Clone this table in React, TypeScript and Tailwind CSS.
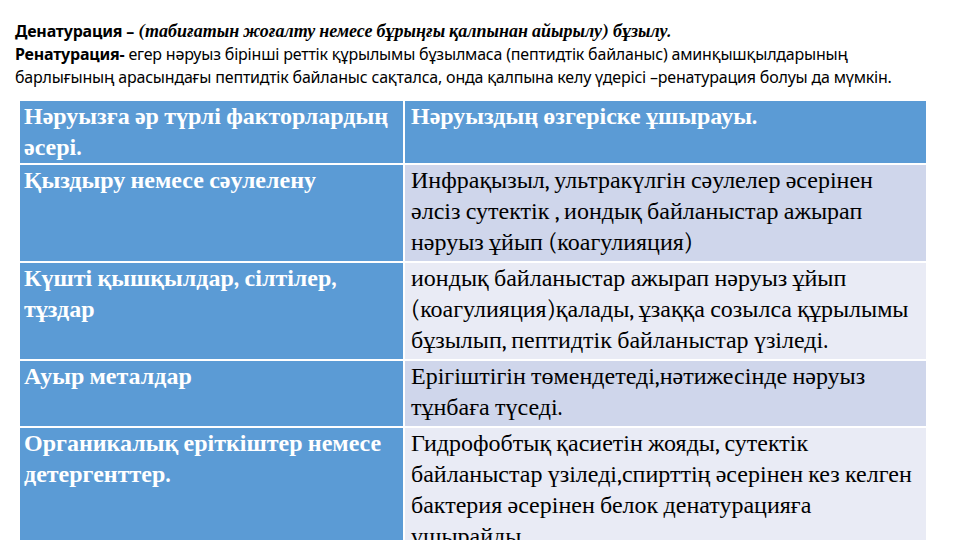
import React from 'react'

const rows = [
  {
    left: 'Қыздыру немесе сәулелену',
    right: 'Инфрақызыл, ультракүлгін сәулелер әсерінен әлсіз сутектік , иондық байланыстар ажырап нәруыз ұйып (коагулияция)',
    shade: 'bg-[#cfd6eb]',
  },
  {
    left: 'Күшті қышқылдар, сілтілер, тұздар',
    right: 'иондық байланыстар ажырап нәруыз ұйып (коагулияция)қалады, ұзаққа созылса құрылымы бұзылып, пептидтік байланыстар үзіледі.',
    shade: 'bg-[#e9ebf5]',
  },
  {
    left: 'Ауыр металдар',
    right: 'Ерігіштігін төмендетеді,нәтижесінде нәруыз тұнбаға түседі.',
    shade: 'bg-[#cfd6eb]',
  },
  {
    left: 'Органикалық еріткіштер немесе детергенттер.',
    right: 'Гидрофобтық қасиетін жояды, сутектік байланыстар үзіледі,спирттің әсерінен кез келген бактерия әсерінен белок денатурацияға ұшырайды.',
    shade: 'bg-[#e9ebf5]',
  },
]

export default function App() {
  return (
    <div className="w-[960px] h-[540px] overflow-hidden bg-white">
      {/* жоғарғы мәтін */}
      <div className="pl-[15px] pt-[20px] text-[16px] leading-[23px] text-black font-sans tracking-[-0.2px]">
        <p>
          <span className="font-bold">Денатурация – </span>
          <span className="font-bold italic font-serif text-[18px] tracking-normal">
            (табиғатын жоғалту немесе бұрыңғы қалпынан айырылу) бұзылу.
          </span>
        </p>
        <p>
          <span className="font-bold">Ренатурация- </span>
          егер нәруыз бірінші реттік құрылымы бұзылмаса (пептидтік байланыс) аминқышқылдарының
        </p>
        <p>
          барлығының арасындағы пептидтік байланыс сақталса, онда қалпына келу үдерісі –ренатурация болуы да мүмкін.
        </p>
      </div>

      {/* кесте */}
      <div className="ml-[20px] mt-[12px] w-[906px] grid grid-cols-[383px_1fr] gap-[2px] bg-white font-serif text-[24px] leading-[31px]">
        <div className="bg-[#5b9bd5] text-white font-bold px-[4px]">
          Нәруызға әр түрлі факторлардың әсері.
        </div>
        <div className="bg-[#5b9bd5] text-white font-bold px-[6px]">
          Нәруыздың өзгеріске ұшырауы.
        </div>
        {rows.map((r, i) => (
          <React.Fragment key={i}>
            <div className="bg-[#5b9bd5] text-white font-bold px-[4px] pb-[3px]">{r.left}</div>
            <div className={`${r.shade} text-black px-[6px] pb-[3px]`}>{r.right}</div>
          </React.Fragment>
        ))}
      </div>
    </div>
  )
}
